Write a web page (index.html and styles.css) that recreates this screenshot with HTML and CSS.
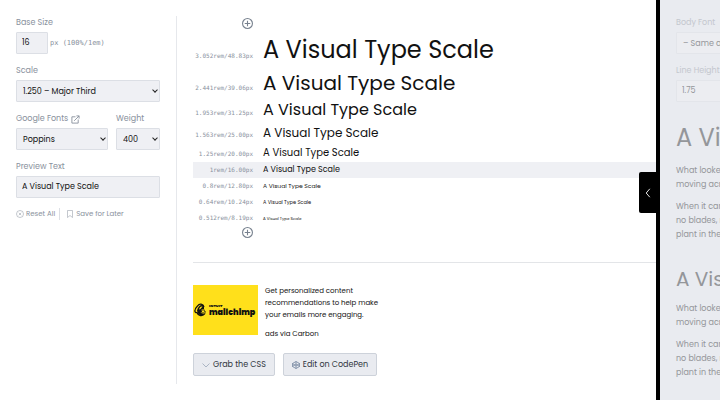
FILE: index.html
```html
<!DOCTYPE html>
<html lang="en">
<head>
    <meta charset="UTF-8">
    <meta name="viewport" content="width=device-width, initial-scale=1.0">
    <title>Type Scale</title>
    <link rel="stylesheet" href="styles.css">
</head>
<body>

    <form class="sidebar">
        <div class="field">
            <label for="base">Base Size</label>
            <div class="base-row">
                <input type="text" id="base" class="base-input" value="16">
                <span class="unit">px (100%/1em)</span>
            </div>
        </div>
        <div class="field">
            <label for="scale">Scale</label>
            <div class="select">
                <select id="scale">
                    <option>1.250 – Major Third</option>
                </select>
            </div>
        </div>
        <div class="font-row">
            <div class="field">
                <label for="font">Google Fonts
                    <svg class="link-icon" viewBox="0 0 20 20"><path d="M10 4H2v14h14v-8M7 13L18 2M12 2h6v6"/></svg>
                </label>
                <div class="select">
                    <select id="font">
                        <option>Poppins</option>
                    </select>
                </div>
            </div>
            <div class="field">
                <label for="weight">Weight</label>
                <div class="select">
                    <select id="weight">
                        <option>400</option>
                    </select>
                </div>
            </div>
        </div>
        <div class="field">
            <label for="preview">Preview Text</label>
            <input type="text" id="preview" value="A Visual Type Scale">
        </div>
        <div class="actions">
            <button type="reset">
                <svg viewBox="0 0 16 16"><circle cx="8" cy="8" r="7"/><path d="M5.5 5.5l5 5M10.5 5.5l-5 5"/></svg>
                Reset All
            </button>
            <button type="button">
                <svg viewBox="0 0 16 16"><path d="M3 1h10v14l-5-4-5 4z"/></svg>
                Save for Later
            </button>
        </div>
    </form>

    <main>
        <section class="scale">
            <button type="button" class="add add-top" aria-label="Add larger size">
                <svg viewBox="0 0 20 20"><circle cx="10" cy="10" r="9"/><path d="M10 5v10M5 10h10"/></svg>
            </button>
            <div class="step step-5"><span class="size">3.052rem/48.83px</span><span class="text">A Visual Type Scale</span></div>
            <div class="step step-4"><span class="size">2.441rem/39.06px</span><span class="text">A Visual Type Scale</span></div>
            <div class="step step-3"><span class="size">1.953rem/31.25px</span><span class="text">A Visual Type Scale</span></div>
            <div class="step step-2"><span class="size">1.563rem/25.00px</span><span class="text">A Visual Type Scale</span></div>
            <div class="step step-1"><span class="size">1.25rem/20.00px</span><span class="text">A Visual Type Scale</span></div>
            <div class="step step-base"><span class="size">1rem/16.00px</span><span class="text">A Visual Type Scale</span></div>
            <div class="step step-s1"><span class="size">0.8rem/12.80px</span><span class="text">A Visual Type Scale</span></div>
            <div class="step step-s2"><span class="size">0.64rem/10.24px</span><span class="text">A Visual Type Scale</span></div>
            <div class="step step-s3"><span class="size">0.512rem/8.19px</span><span class="text">A Visual Type Scale</span></div>
            <button type="button" class="add" aria-label="Add smaller size">
                <svg viewBox="0 0 20 20"><circle cx="10" cy="10" r="9"/><path d="M10 5v10M5 10h10"/></svg>
            </button>
        </section>

        <section class="bottom">
            <div class="ad">
                <a href="#" class="ad-logo">
                    <svg viewBox="0 0 26 28">
                        <path d="M20 8C18 1 11 0 7 6C4 9 2 12 2 15C1 18 4 20 6 19C8 26 17 28 22 21" fill="none" stroke="#111" stroke-width="2.5"/>
                        <path d="M6 15C8 7 12 3 18 4C21 5 20 9 20 12L22 16L24 18C22 24 14 28 8 21Z" fill="#111"/>
                        <path d="M10 13C11 8 14 6 17 7C16 9 14 10 13 12ZM15 13L20 13L21 18L24 19C21 22 16 22 13 19L16 18Z" fill="#ffe01b"/>
                        <path d="M16 15h1M19 15h1M15 19c2 1 4 1 6 0" fill="none" stroke="#111" stroke-width="1.5"/>
                    </svg>
                    <span class="brand"><small>INTUIT</small><b>mailchimp</b></span>
                </a>
                <div class="ad-text">
                    <a href="#">Get personalized content<br>recommendations to help make<br>your emails more engaging.</a>
                    <a href="#">ads via Carbon</a>
                </div>
            </div>
            <div class="buttons">
                <button type="button">
                    <svg viewBox="0 0 16 16"><path d="M1 5l7 7 7-7"/></svg>
                    Grab the CSS
                </button>
                <button type="button">
                    <svg viewBox="0 0 16 16"><path d="M8 1l7 4v6l-7 4-7-4V5zM1 5l7 5 7-5M1 11l7-5 7 5M8 1v5M8 10v5" stroke-width="1.5"/></svg>
                    Edit on CodePen
                </button>
            </div>
        </section>
    </main>

    <aside class="panel">
        <button type="button" class="toggle" aria-label="Open preview">
            <svg viewBox="0 0 10 16"><path d="M8 1L2 8l6 7" stroke-width="1.5"/></svg>
        </button>
        <div class="panel-content">
            <div class="field">
                <label for="body-font">Body Font</label>
                <div class="select">
                    <select id="body-font">
                        <option>– Same as heading</option>
                    </select>
                </div>
            </div>
            <div class="field">
                <label for="line-height">Line Height</label>
                <input type="text" id="line-height" value="1.75">
            </div>
            <h1>A Visual Type Scale</h1>
            <p>What looked like<br>moving across</p>
            <p>When it came<br>no blades, no<br>plant in the</p>
            <h2>A Visual Type Scale</h2>
            <p>What looked like<br>moving across</p>
            <p>When it came<br>no blades, no<br>plant in the</p>
        </div>
    </aside>

</body>
</html>
```
FILE: styles.css
```css
* {
    box-sizing: border-box;
}

body {
    display: flex;
    min-height: 100vh;
    margin: 0;
    overflow: hidden;
    font-family: Poppins, Inter, sans-serif;
    font-size: 8px;
    color: #111;
    background-color: white;
}

button, input, select {
    font-family: inherit;
    font-size: 8px;
    color: inherit;
}

button {
    display: flex;
    align-items: center;
    padding: 0;
    border: none;
    background: none;
    cursor: pointer;
}

svg {
    flex: none;
    fill: none;
    stroke: currentColor;
}

a {
    color: inherit;
    text-decoration: none;
}

.sidebar {
    flex: 0 0 161px;
    margin: 16px 0;
    padding-right: 16px;
    margin-left: 16px;
    border-right: 1px solid #e6e8ec;
}

.field {
    margin-bottom: 10px;
}

.field label {
    display: flex;
    align-items: center;
    gap: 3px;
    height: 14px;
    margin-bottom: 2px;
    color: #89919d;
    white-space: nowrap;
}

.field input, .field select {
    display: block;
    width: 100%;
    height: 22px;
    padding: 0 5px;
    border: 1px solid #dcdfe5;
    border-radius: 1px;
    background-color: #eff0f4;
}

.field select {
    appearance: none;
    padding: 0 6px;
}

.select {
    position: relative;
}

.select::after {
    content: "";
    position: absolute;
    top: 8px;
    right: 3px;
    width: 3px;
    height: 3px;
    border-right: 1px solid #222;
    border-bottom: 1px solid #222;
    transform: rotate(45deg);
    pointer-events: none;
}

.link-icon {
    width: 9px;
    height: 9px;
    stroke-width: 2;
}

.base-row {
    display: flex;
    align-items: center;
    gap: 2px;
}

.field .base-input {
    width: 32px;
}

.unit {
    font-family: "DejaVu Sans Mono", monospace;
    font-size: 7px;
    color: #89919d;
}

.font-row {
    display: grid;
    grid-template-columns: 1fr 44px;
    gap: 8px;
}

.actions {
    display: flex;
    height: 12px;
    color: #89919d;
}

.actions button {
    gap: 2px;
    font-size: 7px;
    white-space: nowrap;
}

.actions button + button {
    margin-left: 4px;
    padding-left: 6px;
    border-left: 1px solid #dcdfe5;
}

.actions svg {
    width: 8px;
    height: 8px;
}

main {
    flex: 1;
    min-width: 0;
    padding: 16px 0 16px 16px;
}

.add {
    justify-content: flex-end;
    width: 60px;
    height: 12px;
    color: #78828f;
}

.add-top {
    margin-top: 1px;
    margin-bottom: 3px;
}

.add svg {
    width: 11px;
    height: 11px;
    stroke-width: 2;
}

.step {
    display: flex;
    align-items: baseline;
    gap: 10px;
    height: 16px;
    line-height: 16px;
    white-space: nowrap;
}

.size {
    flex: 0 0 60px;
    font-family: "DejaVu Sans Mono", monospace;
    font-size: 6px;
    text-align: right;
    color: #89919d;
}

.step-5 {
    height: 36px;
    line-height: 36px;
    font-size: 24px;
}

.step-4 {
    height: 30px;
    line-height: 30px;
    font-size: 20px;
}

.step-3 {
    height: 24px;
    line-height: 24px;
    font-size: 16px;
}

.step-2 {
    height: 22px;
    line-height: 22px;
    font-size: 12px;
}

.step-1 {
    height: 18px;
    line-height: 18px;
    font-size: 10px;
}

.step-base {
    font-size: 8px;
    background-color: #eff0f4;
}

.step-s1 {
    font-size: 6px;
}

.step-s2 {
    font-size: 5px;
}

.step-s3 {
    font-size: 4px;
}

.bottom {
    margin-top: 24px;
    padding-top: 22px;
    border-top: 1px solid #e3e5e8;
}

.ad {
    display: flex;
    gap: 7px;
    margin-bottom: 6px;
}

.ad-logo {
    display: flex;
    align-items: center;
    gap: 2px;
    width: 65px;
    height: 50px;
    padding-left: 1px;
    background-color: #ffe01b;
}

.ad-logo svg {
    width: 13px;
    height: 14px;
    stroke: none;
}

.brand {
    display: flex;
    flex-direction: column;
    font-size: 8px;
    font-weight: 900;
}

.brand small {
    font-size: 4px;
    line-height: 5px;
}

.brand b {
    font-weight: 900;
    line-height: 10px;
}

.ad-text {
    font-size: 7px;
    line-height: 12px;
}

.ad-text a {
    display: block;
    margin-bottom: 7px;
}

.buttons {
    display: flex;
    gap: 8px;
}

.buttons button {
    gap: 3px;
    height: 23px;
    padding: 0 8px;
    border: 1px solid #cdd2da;
    border-radius: 2px;
    color: #30353d;
    background-color: #e9ebf0;
}

.buttons svg {
    width: 8px;
    height: 8px;
    color: #6c7f99;
}

.panel {
    position: relative;
    flex: 0 0 64px;
    min-width: 0;
    border-left: 4px solid black;
    background-color: #e9ebf0;
}

.toggle {
    position: absolute;
    top: 172px;
    left: -21px;
    justify-content: center;
    width: 17px;
    height: 41px;
    border-radius: 2px 0 0 2px;
    color: white;
    background-color: black;
}

.toggle svg {
    width: 6px;
    height: 10px;
}

.panel-content {
    padding: 16px 0 0 16px;
    overflow: hidden;
    white-space: nowrap;
    color: #94969a;
}

.panel-content .field label {
    color: #c4c7ce;
}

.panel-content .field input, .panel-content .field select {
    width: 144px;
    border-color: #e3e5ea;
    background-color: #ecedf1;
}

.panel-content .select {
    width: 144px;
}

h1, h2 {
    margin: 0;
    font-weight: 400;
}

h1 {
    margin-top: 18px;
    font-size: 24px;
    line-height: 36px;
}

h2 {
    margin-top: 22px;
    font-size: 20px;
    line-height: 30px;
}

.panel-content p {
    margin: 8px 0 0;
    line-height: 14px;
}
```
